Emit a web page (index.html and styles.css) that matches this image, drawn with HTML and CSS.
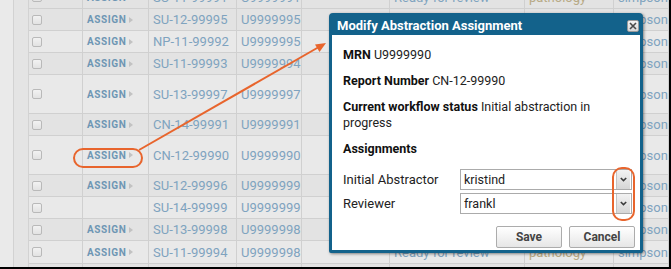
FILE: index.html
```html
<!DOCTYPE html>
<html>
<head>
<meta charset="utf-8">
<link rel="stylesheet" href="styles.css">
</head>
<body>
<div class="page">
  <div class="gutter g1"></div>
  <div class="gutter g2"></div>
  <div class="grid">
    <div class="row r0 dark"><div class="cell"><span class="cb"></span></div><div class="cell"><span class="assign">ASSIGN</span><span class="tri"></span></div><div class="cell txt">SU-11-99991</div><div class="cell txt">U9999991</div><div class="cell"></div><div class="cell txt">Ready for review</div><div class="cell txt tan">pathology</div><div class="cell txt">simpsons</div></div>
    <div class="row dark"><div class="cell"><span class="cb"></span></div><div class="cell"><span class="assign">ASSIGN</span><span class="tri"></span></div><div class="cell txt">SU-12-99995</div><div class="cell txt">U9999995</div><div class="cell"></div><div class="cell"></div><div class="cell"></div><div class="cell txt">simpsons</div></div>
    <div class="row"><div class="cell"><span class="cb"></span></div><div class="cell"><span class="assign">ASSIGN</span><span class="tri"></span></div><div class="cell txt">NP-11-99992</div><div class="cell txt">U9999995</div><div class="cell"></div><div class="cell"></div><div class="cell"></div><div class="cell txt">simpsons</div></div>
    <div class="row dark"><div class="cell"><span class="cb"></span></div><div class="cell"><span class="assign">ASSIGN</span><span class="tri"></span></div><div class="cell txt">SU-11-99993</div><div class="cell txt">U9999994</div><div class="cell"></div><div class="cell"></div><div class="cell"></div><div class="cell txt">simpsons</div></div>
    <div class="row tall"><div class="cell"><span class="cb"></span></div><div class="cell"><span class="assign">ASSIGN</span><span class="tri"></span></div><div class="cell txt">SU-13-99997</div><div class="cell txt">U9999997</div><div class="cell"></div><div class="cell"></div><div class="cell"></div><div class="cell txt">simpsons</div></div>
    <div class="row dark"><div class="cell"><span class="cb"></span></div><div class="cell"><span class="assign">ASSIGN</span><span class="tri"></span></div><div class="cell txt">CN-14-99991</div><div class="cell txt">U9999991</div><div class="cell"></div><div class="cell"></div><div class="cell"></div><div class="cell txt">simpsons</div></div>
    <div class="row tall"><div class="cell"><span class="cb"></span></div><div class="cell"><span class="assign">ASSIGN</span><span class="tri"></span></div><div class="cell txt">CN-12-99990</div><div class="cell txt">U9999990</div><div class="cell"></div><div class="cell"></div><div class="cell"></div><div class="cell txt">simpsons</div></div>
    <div class="row dark"><div class="cell"><span class="cb"></span></div><div class="cell"><span class="assign">ASSIGN</span><span class="tri"></span></div><div class="cell txt">SU-12-99996</div><div class="cell txt">U9999999</div><div class="cell"></div><div class="cell"></div><div class="cell"></div><div class="cell txt">simpsons</div></div>
    <div class="row"><div class="cell"><span class="cb"></span></div><div class="cell"></div><div class="cell txt">SU-14-99999</div><div class="cell txt">U9999999</div><div class="cell"></div><div class="cell"></div><div class="cell"></div><div class="cell txt">simpsons</div></div>
    <div class="row dark"><div class="cell"><span class="cb"></span></div><div class="cell"><span class="assign">ASSIGN</span><span class="tri"></span></div><div class="cell txt">SU-13-99998</div><div class="cell txt">U9999998</div><div class="cell"></div><div class="cell"></div><div class="cell"></div><div class="cell txt">simpsons</div></div>
    <div class="row r23"><div class="cell"><span class="cb"></span></div><div class="cell"><span class="assign">ASSIGN</span><span class="tri"></span></div><div class="cell txt">SU-11-99994</div><div class="cell txt">U9999998</div><div class="cell"></div><div class="cell txt">Ready for review</div><div class="cell txt tan">pathology</div><div class="cell txt">simpsons</div></div>
    <div class="row dark"><div class="cell"><span class="cb"></span></div><div class="cell"></div><div class="cell"></div><div class="cell"></div><div class="cell"></div><div class="cell"></div><div class="cell"></div><div class="cell"></div></div>
  </div>

  <div class="dialog">
    <div class="dlg-head">
      <span class="dlg-title">Modify Abstraction Assignment</span>
      <span class="close"><svg width="8" height="8" viewBox="0 0 8 8"><path d="M1 1L7 7M7 1L1 7" stroke="#4a4a4a" stroke-width="1.6"/></svg></span>
    </div>
    <div class="dlg-body">
      <p><b>MRN</b> U9999990</p>
      <p><b>Report Number</b> CN-12-99990</p>
      <p><b>Current workflow status</b> Initial abstraction in progress</p>
      <p class="h"><b>Assignments</b></p>
      <div class="form">
        <div class="frow"><span class="lbl">Initial Abstractor</span><span class="sel"><span class="val">kristind</span><span class="arr"><svg width="7" height="5" viewBox="0 0 7 5"><path d="M0.8 1L3.5 3.6L6.2 1" fill="none" stroke="#3c3c3c" stroke-width="1.6"/></svg></span></span></div>
        <div class="frow"><span class="lbl">Reviewer</span><span class="sel"><span class="val">frankl</span><span class="arr"><svg width="7" height="5" viewBox="0 0 7 5"><path d="M0.8 1L3.5 3.6L6.2 1" fill="none" stroke="#3c3c3c" stroke-width="1.6"/></svg></span></span></div>
      </div>
      <div class="btns"><span class="btn">Save</span><span class="btn">Cancel</span></div>
    </div>
  </div>

  <svg class="annot" width="671" height="269" viewBox="0 0 671 269">
    <rect x="74" y="149" width="68" height="18" rx="9" fill="none" stroke="#e8652d" stroke-width="2"/>
    <rect x="613" y="168" width="21" height="52" rx="9" fill="none" stroke="#e8652d" stroke-width="2"/>
    <line x1="139" y1="150" x2="318" y2="47.5" stroke="#e8652d" stroke-width="2"/>
    <polygon points="326,43 319.5,52 315,44.5" fill="#e8652d"/>
  </svg>
</div>
</body>
</html>
```
FILE: styles.css
```css
html, body { margin: 0; padding: 0; }
body { background: #fff; }
.page {
  position: relative;
  width: 669px;
  height: 267px;
  border-right: 2px solid #000;
  border-bottom: 2px solid #000;
  overflow: hidden;
  display: flex;
  background: #e6e6e6;
  font-family: Roboto, "Liberation Sans", sans-serif;
}
.gutter { box-sizing: border-box; border-right: 1px solid #d2d2d2; height: 100%; flex: none; }
.g1 { width: 14px; background: #eaeaea; }
.g2 { width: 15px; background: #e4e4e4; }
.grid { flex: 1; display: flex; flex-direction: column; margin-top: -14px; }
.row {
  display: grid;
  grid-template-columns: 54px 66px 88px 65px 88px 135px 89px 1fr;
  height: 22px;
  box-sizing: border-box;
  border-bottom: 1px solid #d0d0d0;
  background: #e9e9e9;
  flex: none;
}
.row.dark { background: #e3e3e3; }
.row.r0 { height: 23px; }
.row.tall { height: 39px; }
.row.r23 { height: 23px; }
.cell {
  box-sizing: border-box;
  border-right: 1px solid #d0d0d0;
  display: flex;
  align-items: center;
  padding-left: 4px;
  white-space: nowrap;
  overflow: hidden;
}
.cell:first-child { padding-left: 3px; }
.txt { font-size: 13px; color: #7fa3bf; }
.tan { color: #b8aa86; }
.cb {
  width: 10px; height: 10px;
  box-sizing: border-box;
  border: 1px solid #b9b9b9;
  border-radius: 2px;
  background: linear-gradient(#f2f2f2, #e2e2e2);
}
.assign { font-size: 10px; font-weight: 700; letter-spacing: 0.6px; color: #6e96b4; }
.tri {
  width: 0; height: 0;
  margin-left: 3px;
  border-top: 3.5px solid transparent;
  border-bottom: 3.5px solid transparent;
  border-left: 4px solid #c2c2c2;
}
.dialog {
  position: absolute;
  left: 329px; top: 13px;
  width: 314px; height: 240px;
  box-sizing: border-box;
  border: 3px solid #13628b;
  border-radius: 4px 4px 2px 2px;
  background: #fff;
  box-shadow: 1px 1px 3px rgba(0,0,0,0.45);
  display: flex;
  flex-direction: column;
}
.dlg-head {
  height: 19px;
  background: #13628b;
  display: flex;
  align-items: center;
  justify-content: space-between;
  padding: 0 1px 0 5px;
  flex: none;
}
.dlg-title { color: #fff; font-weight: 700; font-size: 13px; }
.close {
  width: 12px; height: 12px;
  box-sizing: border-box;
  border: 1px solid #9a9a9a;
  border-radius: 2px;
  background: linear-gradient(#f4f4f4, #d8d8d8);
  display: flex; align-items: center; justify-content: center;
}
.dlg-body {
  flex: 1;
  padding: 12px 5px 0 11px;
  font-size: 12.5px;
  color: #222;
  display: flex;
  flex-direction: column;
}
.dlg-body p { margin: 0 0 10px; line-height: 16px; }
.dlg-body p b { font-weight: 700; color: #111; }
.dlg-body p.h { margin-bottom: 12px; }
.form { display: flex; flex-direction: column; gap: 3px; padding-right: 3px; }
.frow { display: flex; align-items: center; height: 21px; }
.lbl { width: 117px; flex: none; font-size: 13px; color: #222; }
.sel {
  flex: 1;
  height: 21px;
  box-sizing: border-box;
  border: 1px solid #ababab;
  display: flex;
  align-items: center;
  background: #fff;
}
.val { flex: 1; padding-left: 3px; font-size: 12.5px; color: #222; }
.arr {
  width: 14px; height: 100%;
  margin-right: 1px;
  box-sizing: border-box;
  border-left: 1px solid #c4c4c4;
  background: linear-gradient(#f2f2f2, #d6d6d6);
  display: flex; align-items: center; justify-content: center;
}
.btns { display: flex; justify-content: flex-end; gap: 7px; margin-top: 12px; }
.btn {
  width: 66px; height: 22px;
  box-sizing: border-box;
  border: 1px solid #acacac;
  border-radius: 2px;
  background: linear-gradient(#ffffff, #e6e6e6);
  display: flex; align-items: center; justify-content: center;
  font-size: 12px; font-weight: 700; color: #444;
}
.annot { position: absolute; left: 0; top: 0; pointer-events: none; }
```
